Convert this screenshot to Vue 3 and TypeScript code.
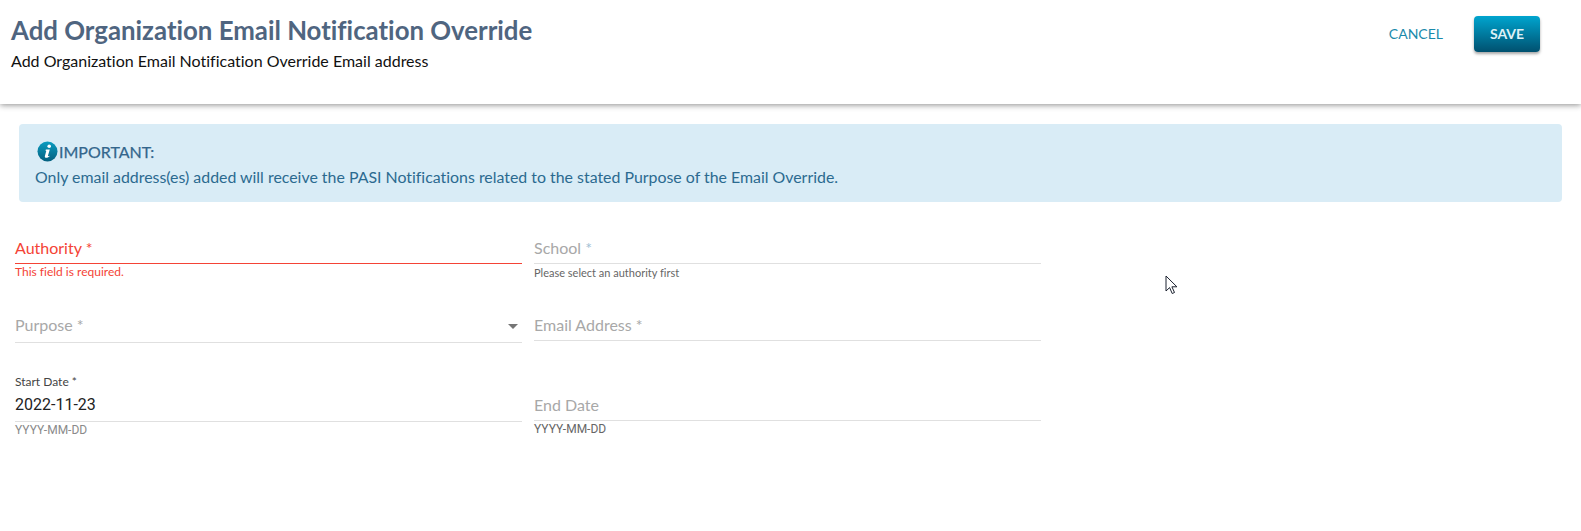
<script setup lang="ts">
const title = 'Add Organization Email Notification Override'
</script>

<template>
  <div class="page">
    <header class="top">
      <div class="heading">
        <h1>{{ title }}</h1>
        <p>{{ title }} Email address</p>
      </div>
      <div class="actions">
        <button class="cancel" type="button">CANCEL</button>
        <button class="save" type="button">SAVE</button>
      </div>
    </header>

    <section class="notice">
      <div class="notice-head">
        <svg class="info" width="21" height="21" viewBox="0 0 21 21" aria-hidden="true">
          <defs>
            <linearGradient id="ig" x1="0" y1="0" x2="0" y2="1">
              <stop offset="0" stop-color="#0a9cc0" />
              <stop offset="1" stop-color="#04607f" />
            </linearGradient>
          </defs>
          <circle cx="10.5" cy="10.5" r="10" fill="url(#ig)" />
          <circle cx="12.2" cy="5.2" r="1.8" fill="#fff" />
          <path d="M9 8.5h3.8L11 14.6c-.2.7.3.9 1.4.2l.2.5c-1.3 1.1-2.3 1.5-3.4 1.5-1.1 0-1.6-.7-1.3-1.8l1.3-4.8c.1-.5-.2-.7-1-.7z" fill="#fff" />
        </svg>
        <span>IMPORTANT:</span>
      </div>
      <div class="notice-text">Only email address(es) added will receive the PASI Notifications related to the stated Purpose of the Email Override.</div>
    </section>

    <form class="form">
      <div class="field">
        <div class="control error">Authority *</div>
        <div class="help help-error">This field is required.</div>
      </div>
      <div class="field">
        <div class="control placeholder">School <span class="star">*</span></div>
        <div class="help">Please select an authority first</div>
      </div>
      <div class="field">
        <div class="control placeholder select">
          <span>Purpose *</span>
          <span class="caret"></span>
        </div>
      </div>
      <div class="field">
        <div class="control placeholder short">Email Address *</div>
      </div>
      <div class="field">
        <div class="control date">
          <label>Start Date *</label>
          <div class="value">2022-11-23</div>
        </div>
        <div class="help hint">YYYY-MM-DD</div>
      </div>
      <div class="field">
        <div class="control date placeholder">End Date</div>
        <div class="help hint hint-dark">YYYY-MM-DD</div>
      </div>
    </form>

    <svg class="cursor" width="14" height="20" viewBox="0 0 14 20" aria-hidden="true">
      <path d="M1 1v15l3.6-3.4 2.6 5.9 2.3-1-2.6-5.7h5z" fill="#fff" stroke="#1c2230" stroke-width="1" stroke-linejoin="miter" />
    </svg>
  </div>
</template>

<style scoped>
.page {
  position: relative;
  width: 1581px;
  height: 531px;
  background: #fff;
  overflow: hidden;
  font-family: Lato, "Open Sans", sans-serif;
  font-variant-ligatures: none;
}
.top {
  height: 104px;
  box-sizing: border-box;
  display: flex;
  justify-content: space-between;
  padding: 16px 41px 0 11px;
  background: #fff;
  box-shadow: 0 1px 6px rgba(0, 0, 0, 0.45);
}
h1 {
  margin: -1px 0 0;
  font-size: 25.8px;
  line-height: 31px;
  font-weight: 700;
  color: #4f6580;
}
.heading p {
  margin: 4px 0 0;
  font-size: 16px;
  line-height: 22px;
  color: #111;
}
.actions {
  display: flex;
  align-items: flex-start;
  gap: 31px;
}
button {
  font-family: Lato, sans-serif;
  font-size: 14px;
  border: 0;
  padding: 0 0 2px;
  cursor: pointer;
}
.cancel {
  height: 36px;
  background: none;
  color: #1a8aab;
}
.save {
  width: 66px;
  height: 36px;
  border-radius: 4px;
  color: #dff1f6;
  font-weight: 700;
  background: linear-gradient(#00a5cf, #00506f);
  box-shadow: 0 2px 3px rgba(0, 0, 0, 0.35);
}
.notice {
  margin: 20px 19px 0 19px;
  height: 78px;
  box-sizing: border-box;
  padding: 16px 16px 0;
  background: #d9ecf6;
  border-radius: 4px;
  color: #2b6a90;
  font-size: 15.9px;
}
.notice-head {
  display: flex;
  align-items: center;
  gap: 1px;
  height: 22px;
  font-size: 16px;
  color: #33668c;
  -webkit-text-stroke: 0.25px #33668c;
  padding-left: 2px;
}
.notice-text {
  margin-top: 4px;
  line-height: 22px;
}
.form {
  display: grid;
  grid-template-columns: 507px 507px;
  grid-template-rows: 78px 60px auto;
  column-gap: 12px;
  margin: 32px 0 0 15px;
}
.field {
  min-width: 0;
}
.control {
  height: 30px;
  box-sizing: border-box;
  border-bottom: 1px solid #e0e0e0;
  font-size: 16px;
  line-height: 28px;
}
.error {
  color: #f44336;
  border-bottom-color: #f44336;
}
.placeholder {
  color: #a8a8a8;
}
.star {
  color: #9fc0d4;
}
.select {
  height: 31px;
  line-height: 26px;
  display: flex;
  justify-content: space-between;
  align-items: flex-start;
}
.short {
  height: 29px;
  line-height: 26px;
}
.caret {
  width: 0;
  height: 0;
  margin: 12px 4px 0 0;
  border-left: 5px solid transparent;
  border-right: 5px solid transparent;
  border-top: 5px solid #757575;
}
.date {
  height: 49px;
  color: #222;
}
.date.placeholder {
  color: #a8a8a8;
  padding-top: 19px;
}
.date label {
  display: block;
  margin-top: 1px;
  font-size: 12px;
  line-height: 18px;
  color: #444;
}
.value {
  margin-top: 2px;
  font-family: Roboto, sans-serif;
  font-size: 16px;
  line-height: 24px;
  color: #222;
}
.help {
  margin-top: 2px;
  font-size: 11px;
  line-height: 14px;
  color: #666;
}
.help-error {
  margin-top: 1px;
  font-size: 12px;
  color: #f44336;
}
.hint {
  margin-top: 1px;
  font-family: Roboto, sans-serif;
  font-size: 12px;
  color: #8a8a8a;
}
.hint-dark {
  color: #666;
}
.cursor {
  position: absolute;
  left: 1165px;
  top: 275px;
}
</style>
